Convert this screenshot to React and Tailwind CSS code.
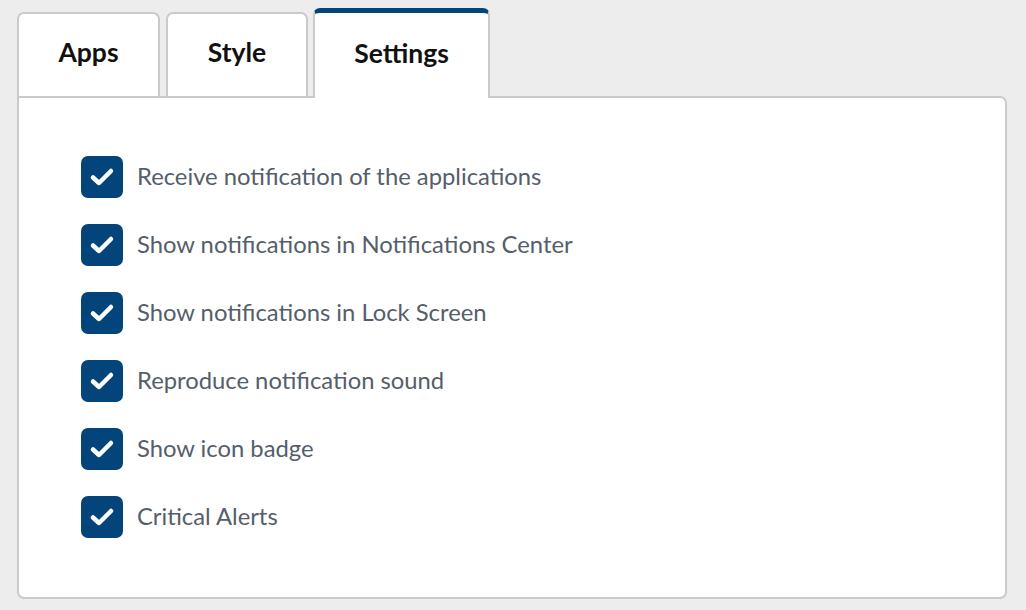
import React from 'react';

const items = [
  'Receive notification of the applications',
  'Show notifications in Notifications Center',
  'Show notifications in Lock Screen',
  'Reproduce notification sound',
  'Show icon badge',
  'Critical Alerts',
];

function Check() {
  return (
    <span className="w-[42px] h-[42px] shrink-0 rounded-[7px] bg-[#03457a] flex items-center justify-center">
      <svg width="42" height="42" viewBox="0 0 42 42">
        <polyline points="12,21.5 18,27 30,15" fill="none" stroke="white" strokeWidth="4.5" strokeLinecap="round" strokeLinejoin="round" />
      </svg>
    </span>
  );
}

export default function App() {
  return (
    <div className="h-screen bg-[#ededed] pt-[8px] pl-[17px] pr-[19px] pb-[11px] flex flex-col font-['Lato','Liberation_Sans',sans-serif]">
      {/* Tabs */}
      <div className="flex items-end h-[88px] shrink-0">
        <div className="w-[143px] h-[84px] bg-white border-2 border-b-0 border-[#cacaca] rounded-t-[7px] flex items-center justify-center pb-[4px] text-[26.5px] font-bold text-[#111]">
          Apps
        </div>
        <div className="ml-[6px] w-[142px] h-[84px] bg-white border-2 border-b-0 border-[#cacaca] rounded-t-[7px] flex items-center justify-center pb-[4px] text-[26.5px] font-bold text-[#111]">
          Style
        </div>
        <div className="relative z-10 -mb-[2px] ml-[5px] w-[177px] h-[90px] bg-white border-2 border-b-0 border-[#cacaca] border-t-[5px] border-t-[#03457a] rounded-t-[7px] flex items-center justify-center pb-[4px] text-[26.5px] font-bold text-[#111]">
          Settings
        </div>
      </div>

      {/* Panel */}
      <div className="flex-1 bg-white border-2 border-[#cacaca] rounded-[7px] rounded-tl-none pl-[62px] pt-[58px]">
        <div className="flex flex-col gap-[26px]">
          {items.map((t) => (
            <label key={t} className="flex items-center gap-[14px]">
              <Check />
              <span className="text-[23.8px] text-[#555e6b]">{t}</span>
            </label>
          ))}
        </div>
      </div>
    </div>
  );
}
